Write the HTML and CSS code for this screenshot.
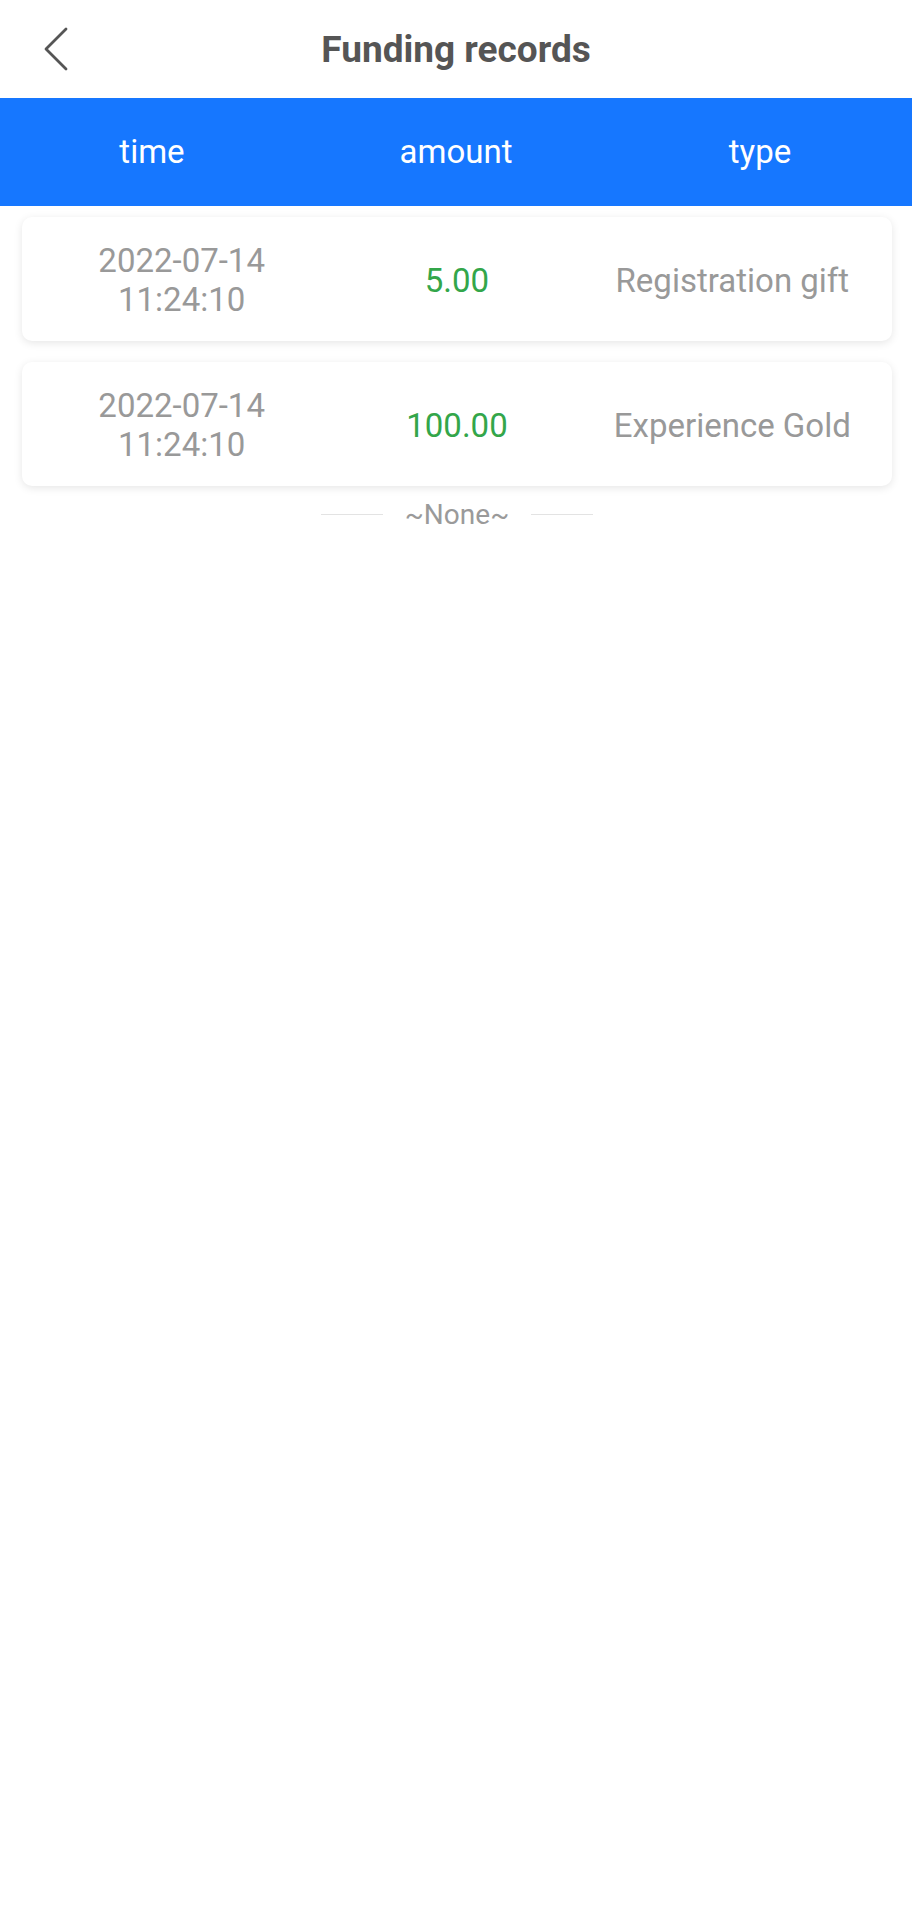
FILE: index.html
```html
<!DOCTYPE html>
<html lang="en">
<head>
<meta charset="utf-8">
<title>Funding records</title>
<link rel="stylesheet" href="styles.css">
</head>
<body>
<div class="page">
  <header class="topbar">
    <button class="back" aria-label="Back">
      <svg width="28" height="44" viewBox="0 0 28 44"><polyline points="24,2 4,22 24,42" fill="none" stroke="#555" stroke-width="2.8" stroke-linecap="round" stroke-linejoin="round"/></svg>
    </button>
    <h1 class="title">Funding records</h1>
  </header>
  <div class="thead">
    <div class="th">time</div>
    <div class="th">amount</div>
    <div class="th">type</div>
  </div>
  <div class="list">
    <div class="card">
      <div class="cell date">2022-07-14<br>11:24:10</div>
      <div class="cell amount">5.00</div>
      <div class="cell type">Registration gift</div>
    </div>
    <div class="card">
      <div class="cell date">2022-07-14<br>11:24:10</div>
      <div class="cell amount">100.00</div>
      <div class="cell type">Experience Gold</div>
    </div>
    <div class="end">
      <span class="line"></span>
      <span class="end-text">~None~</span>
      <span class="line"></span>
    </div>
  </div>
</div>
</body>
</html>
```

FILE: styles.css
```css
* { box-sizing: border-box; }
html, body { margin: 0; padding: 0; background: #fff; }
body { font-family: Roboto, "Noto Sans", "Liberation Sans", sans-serif; }
.page { width: 912px; min-height: 1920px; background: #fff; }

.topbar {
  position: relative;
  height: 98px;
  display: flex;
  align-items: center;
  justify-content: center;
}
.back {
  position: absolute;
  left: 42px;
  top: 27px;
  padding: 0;
  border: 0;
  background: none;
  display: flex;
}
.title {
  margin: 0;
  font-size: 37px;
  font-weight: 700;
  color: #555;
  letter-spacing: 0;
}

.thead {
  height: 108px;
  background: #1677ff;
  display: grid;
  grid-template-columns: repeat(3, 1fr);
  align-items: center;
}
.th {
  text-align: center;
  color: #fff;
  font-size: 33px;
  padding-bottom: 2px;
}

.list {
  padding: 11px 20px 0 22px;
  display: flex;
  flex-direction: column;
  gap: 21px;
}
.card {
  height: 124px;
  border-radius: 10px;
  background: #fff;
  box-shadow: 0 2px 8px rgba(0,0,0,0.10);
  display: grid;
  grid-template-columns: repeat(3, 1fr);
  align-items: center;
  padding: 2px 22px 0;
}
.cell { text-align: center; font-size: 33px; line-height: 39px; color: #999; white-space: nowrap; }
.amount { color: #33a64a; }

.end {
  margin-top: -9px;
  display: flex;
  align-items: center;
  justify-content: center;
  gap: 22px;
}
.line { width: 62px; height: 1px; background: #e3e3e3; }
.end-text { font-size: 28px; color: #9a9a9a; }
```
